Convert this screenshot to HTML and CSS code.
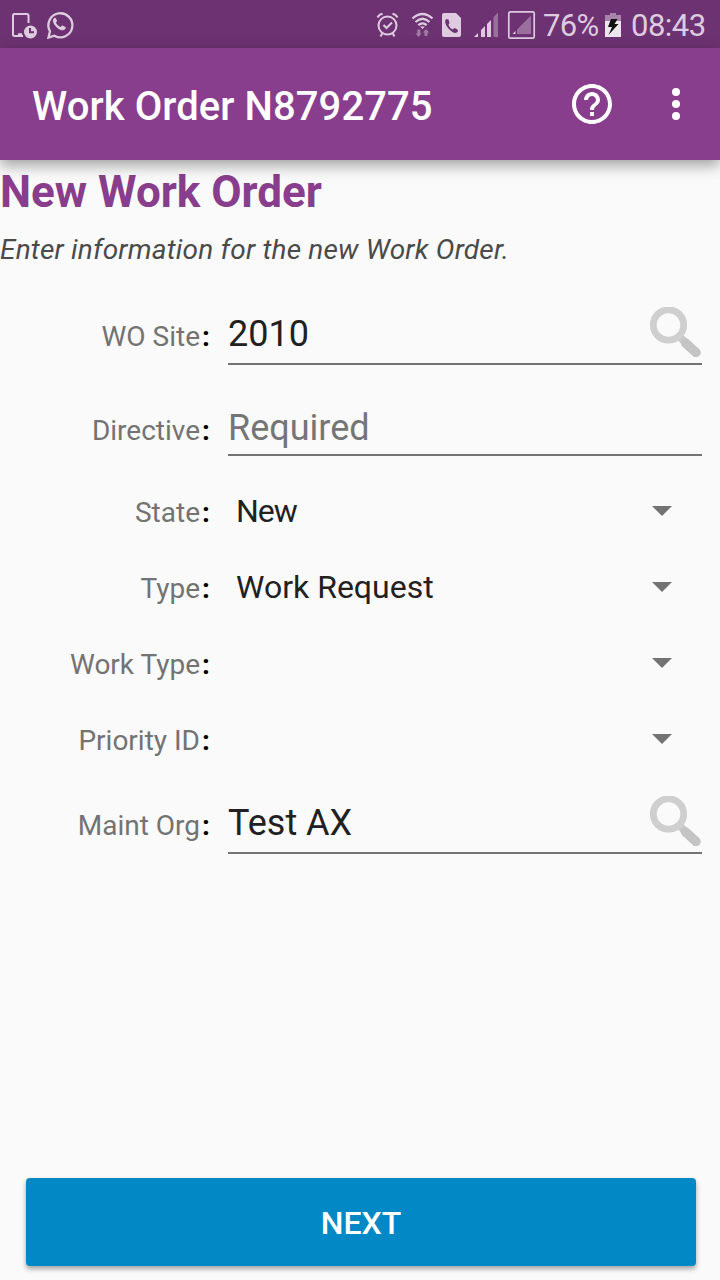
FILE: index.html
```html
<!DOCTYPE html>
<html lang="en">
<head>
<meta charset="utf-8">
<title>Work Order N8792775</title>
<link rel="stylesheet" href="styles.css">
</head>
<body>
<div class="status">
  <svg class="status-left" width="80" height="48" viewBox="0 0 80 48" fill="none" stroke="#decbe0" stroke-width="2">
    <path d="M28.500 23V15.500Q28.500 14 27 14H14.500Q13 14 13 15.500V34.500Q13 36 14.500 36H23M18 34.300H22"/>
    <circle cx="30.500" cy="32" r="6.500" fill="#decbe0" stroke="none"/>
    <path d="M30 28V32.300H34" stroke="#6d3271"/>
    <path d="M48.500 37.500 50 31.300A12 12 0 1 1 54.400 35.700Z" stroke-width="2.300"/>
    <path d="M54.500 18C51.800 19.500 52.700 23.200 56.300 26.900S64 31.500 65.500 28.600C66 27.500 65.800 27 65 26.700L62.500 25.500C61.500 25 61.300 26.700 60.400 27C58.800 26.600 56.600 24.300 56 22.800C56 22.200 57.300 21.700 57 20.800L56 18.500C55.700 17.900 55.200 17.700 54.500 18Z" fill="#decbe0" stroke="none"/>
  </svg>
  <svg class="status-right" width="166" height="48" viewBox="374 0 166 48" fill="none" stroke="#decbe0" stroke-width="2">
    <circle cx="387.500" cy="25.500" r="9"/>
    <path d="M383.500 25 386.500 28 392 22.500M377.500 17.500Q379 14.500 382.500 13.800M397.500 17.500Q396 14.500 392.500 13.800M382.500 33 380.500 36.500M392.500 33 394.500 36.500"/>
    <path d="M412.500 18.500Q422.500 9.500 432.500 18.500M415.500 22Q422.500 15.500 429.500 22M418.300 25.200Q422.500 21.500 426.700 25.200" stroke-width="2.300"/>
    <path d="M420 26.500H425L422.500 29Z" fill="#decbe0" stroke="none"/>
    <path d="M417.300 29.500H420.300V33.500H421.500L418.500 37 415.500 33.500H417.300ZM424.500 36V32.500H423L426 29 429.200 32.500H427.500V36Z" fill="#a27aa5" stroke="none"/>
    <path d="M444 13H456L461 18V35Q461 37 459 37H444Q442 37 442 35V15Q442 13 444 13Z" fill="#decbe0" stroke="none"/>
    <path d="M446 19C444 22 446 26 449.500 29.500S456 34 458 31.500L457.500 29.500 454.500 28 452.500 29.500C450.500 28.500 449 26.500 448.500 24.500L449.500 23 448.500 19.500Z" fill="#6d3271" stroke="none"/>
    <path d="M474 37 478 33V37ZM481 30 485 26V37H481ZM487 24 491 20V37H487Z" fill="#decbe0" stroke="none"/>
    <path d="M493.500 17 498 12.500V37H493.500Z" fill="#9a6e9d" stroke="none"/>
    <rect x="508.800" y="11.800" width="25.400" height="26.400" rx="1.500" stroke-width="1.700"/>
    <path d="M517 29.500 531 15.500V34H517Z" fill="#9a6e9d" stroke="none"/>
    <path d="M512.500 34 515.500 31V34Z" fill="#decbe0" stroke="none"/>
  </svg>
  <span class="percent">76%</span>
  <svg class="battery" width="16" height="48" viewBox="605 0 16 48">
    <path d="M605 15H610V13H616V15H621V21H605Z" fill="#a883ab"/>
    <path d="M605 21H621V37H605Z" fill="#eee5ef"/>
    <path d="M611 19H617.500L614.500 24H618.500L608.500 35 612 27H608Z" fill="#111"/>
  </svg>
  <span class="clock">08:43</span>
</div>
<header class="appbar">
  <h1 class="title">Work Order N8792775</h1>
  <svg class="help" width="48" height="48" viewBox="0 0 24 24" fill="#fff"><path d="M11 18h2v-2h-2v2zm1-16C6.480 2 2 6.480 2 12s4.480 10 10 10 10-4.480 10-10S17.520 2 12 2zm0 18c-4.410 0-8-3.590-8-8s3.590-8 8-8 8 3.590 8 8-3.590 8-8 8zm0-14c-2.210 0-4 1.790-4 4h2c0-1.100.9-2 2-2s2 .9 2 2c0 2-3 1.750-3 5h2c0-2.250 3-2.500 3-5 0-2.210-1.790-4-4-4z"/></svg>
  <svg class="more" width="48" height="48" viewBox="0 0 24 24" fill="#fff"><circle cx="12" cy="6" r="2"/><circle cx="12" cy="12" r="2"/><circle cx="12" cy="18" r="2"/></svg>
</header>
<main class="content">
  <h2 class="heading">New Work Order</h2>
  <p class="intro">Enter information for the new Work Order.</p>
  <div class="form">
    <div class="row row-site"><span class="label">WO Site</span><span class="colon">:</span>
      <div class="field">2010<svg class="search" width="54" height="54" viewBox="0 0 54 54"><use href="#lens"/></svg></div></div>
    <div class="row row-directive"><span class="label">Directive</span><span class="colon">:</span>
      <div class="field field-short hint">Required</div></div>
    <div class="row row-select"><span class="label">State</span><span class="colon">:</span><div class="select"><span class="state">New</span><i class="arrow"></i></div></div>
    <div class="row row-select"><span class="label">Type</span><span class="colon">:</span><div class="select">Work Request<i class="arrow"></i></div></div>
    <div class="row row-select"><span class="label">Work Type</span><span class="colon">:</span><div class="select"><i class="arrow"></i></div></div>
    <div class="row row-select"><span class="label">Priority ID</span><span class="colon">:</span><div class="select"><i class="arrow"></i></div></div>
    <div class="row row-org"><span class="label">Maint Org</span><span class="colon">:</span>
      <div class="field">Test AX<svg class="search" width="54" height="54" viewBox="0 0 54 54"><use href="#lens"/></svg></div></div>
  </div>
  <button class="next">NEXT</button>
</main>
<svg class="defs" width="0" height="0">
  <defs>
    <filter id="soft" x="-10%" y="-10%" width="120%" height="120%"><feGaussianBlur stdDeviation="0.7"/></filter>
    <g id="lens" filter="url(#soft)" fill="none">
      <path d="M29 29 37 37" stroke="#cbcbcb" stroke-width="7.500"/>
      <circle cx="18.500" cy="18" r="15.200" stroke="#cfcfcf" stroke-width="6.800"/>
      <path d="M35.500 36 46 45.500" stroke="#c4c4c4" stroke-width="9.500" stroke-linecap="round"/>
    </g>
  </defs>
</svg>
</body>
</html>
```
FILE: styles.css
```css
* { box-sizing: border-box; }
body {
  margin: 0;
  height: 1280px;
  display: flex;
  flex-direction: column;
  overflow: hidden;
  background: #fafafa;
  font-family: Roboto, sans-serif;
}
.status {
  height: 48px;
  flex: none;
  display: flex;
  background: #6d3271;
  color: #decbe0;
  font-size: 31px;
  line-height: 52px;
}
.status svg { flex: none; }
.status-right { margin-left: auto; }
.percent { width: 62px; margin-left: 3px; letter-spacing: -.7px; white-space: nowrap; }
.clock { width: 89px; margin-left: 10px; letter-spacing: -.5px; white-space: nowrap; }
.appbar {
  position: relative;
  height: 112px;
  flex: none;
  display: flex;
  align-items: center;
  padding: 0 20px 0 32px;
  background: #883e8c;
  color: #fff;
  box-shadow: 0 5px 14px rgba(0, 0, 0, .38);
}
.title { margin: 6px 0 0; flex: 1; font-size: 40px; font-weight: 500; letter-spacing: .08px; line-height: 48px; }
.more { margin-left: 36px; }
.content { flex: 1; display: flex; flex-direction: column; }
.heading { margin: 6px 0 0; color: #883e8c; font-size: 44px; font-weight: 700; line-height: 52px; }
.intro { margin: 15px 0 25px; color: #4a4a4a; font-size: 28px; font-style: italic; letter-spacing: .2px; line-height: 34px; }
.row {
  height: 76px;
  padding: 19px 18px 0 0;
  display: grid;
  grid-template-columns: 200px 28px 1fr;
  align-items: baseline;
  align-content: start;
}
.row-site { height: 91px; padding-top: 20px; }
.row-directive { height: 90px; padding-top: 23px; }
.row-select { align-items: start; }
.row-select .label, .row-select .colon { margin-top: 5px; }
.row-org { height: 90px; padding-top: 24px; }
.label { color: #737373; font-size: 28px; line-height: 32px; text-align: right; }
.colon { padding-left: 2px; color: #000; font-size: 28px; font-weight: 700; line-height: 32px; }
.field {
  position: relative;
  padding-bottom: 7px;
  border-bottom: 2px solid #737373;
  color: #212121;
  font-size: 36px;
  line-height: 44px;
}
.field-short { padding-bottom: 4px; }
.hint { color: #757575; }
.search { position: absolute; right: -2px; top: -5px; }
.select {
  min-height: 38px;
  display: flex;
  justify-content: space-between;
  padding: 0 30px 0 8px;
  color: #212121;
  font-size: 32px;
  line-height: 38px;
}
.state { letter-spacing: -1px; }
.arrow { width: 20px; height: 10px; margin-top: 14px; margin-left: auto; background: #737373; clip-path: polygon(0 0, 100% 0, 50% 100%); }
.next {
  height: 88px;
  margin: auto 24px 14px 26px;
  border: 0;
  border-radius: 4px;
  background: #0288c4;
  color: #fff;
  font: 500 32px/88px Roboto, sans-serif;
  box-shadow: 0 3px 5px rgba(0, 0, 0, .35);
}
.defs { position: absolute; }
```
